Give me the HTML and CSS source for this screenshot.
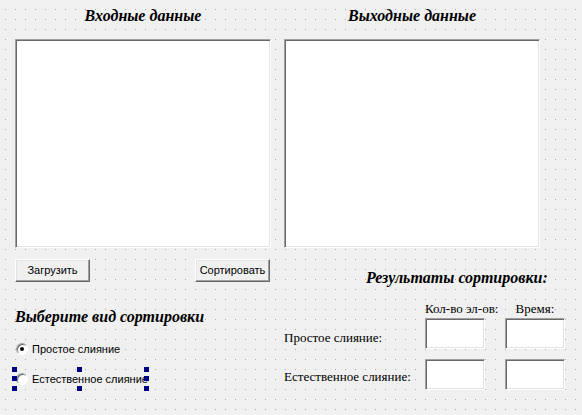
FILE: index.html
```html
<!DOCTYPE html>
<html lang="ru">
<head>
<meta charset="utf-8">
<title>Сортировка слиянием</title>
<link rel="stylesheet" href="styles.css">
</head>
<body>
<div class="form">
  <div class="top">
    <div class="col">
      <div class="title">Входные данные</div>
      <div class="memo"></div>
    </div>
    <div class="col">
      <div class="title">Выходные данные</div>
      <div class="memo"></div>
    </div>
  </div>
  <div class="bottom">
    <div class="left">
      <div class="buttons">
        <div class="btn">Загрузить</div>
        <div class="btn">Сортировать</div>
      </div>
      <div class="heading">Выберите вид сортировки</div>
      <div class="radio first">
        <span class="circle checked"></span>
        <span class="rlabel">Простое слияние</span>
      </div>
      <div class="radio second selected">
        <span class="circle"></span>
        <span class="rlabel">Естественное слияние</span>
        <span class="h h-tl"></span><span class="h h-tm"></span><span class="h h-tr"></span>
        <span class="h h-ml"></span><span class="h h-mr"></span>
        <span class="h h-bl"></span><span class="h h-bm"></span><span class="h h-br"></span>
      </div>
    </div>
    <div class="right">
      <div class="heading res">Результаты сортировки:</div>
      <div class="table">
        <div class="hdr hdr1">Кол-во эл-ов:</div>
        <div class="hdr hdr2">Время:</div>
        <div class="lbl">Простое слияние:</div>
        <div class="edit"></div>
        <div class="edit"></div>
        <div class="lbl lbl2">Естественное слияние:</div>
        <div class="edit edit2"></div>
        <div class="edit edit2"></div>
      </div>
    </div>
  </div>
</div>
</body>
</html>
```
FILE: styles.css
```css
html, body {
  margin: 0;
  padding: 0;
}
body {
  width: 582px;
  height: 415px;
  overflow: hidden;
  background-color: #f0f0f0;
  background-image:
    linear-gradient(to bottom, transparent 1px, #f0f0f0 1px),
    linear-gradient(to right, #a8a8a8 1px, transparent 1px);
  background-size: 10px 10px, 10px 10px;
  background-position: 5px 9px, 5px 9px;
  font-family: "Liberation Serif", "Times New Roman", serif;
  color: #000;
}
.form {
  padding-left: 15px;
}
.top {
  display: flex;
  gap: 13px;
}
.col {
  width: 256px;
  display: flex;
  flex-direction: column;
  align-items: center;
}
.title, .heading {
  font-family: "Liberation Serif", "Times New Roman", serif;
  font-weight: bold;
  font-style: italic;
  font-size: 16px;
  line-height: 18px;
  height: 18px;
  white-space: nowrap;
}
.title {
  margin-top: 7px;
  margin-bottom: 14px;
}
.memo {
  box-sizing: border-box;
  width: 256px;
  height: 209px;
  background: #fff;
  border-top: 1px solid #a0a0a0;
  border-left: 1px solid #a0a0a0;
  border-right: 1px solid #fff;
  border-bottom: 1px solid #fff;
  box-shadow: inset 1px 1px 0 #696969, inset -1px -1px 0 #e3e3e3;
}
.bottom {
  display: flex;
  align-items: flex-start;
}
.left {
  width: 269px;
  display: flex;
  flex-direction: column;
}
.buttons {
  margin-top: 11px;
  width: 255px;
  display: flex;
  justify-content: space-between;
}
.btn {
  box-sizing: border-box;
  width: 75px;
  height: 23px;
  display: flex;
  align-items: center;
  justify-content: center;
  font-family: "Liberation Sans", Arial, sans-serif;
  font-size: 11px;
  background: #f0f0f0;
  border-top: 1px solid #fff;
  border-left: 1px solid #fff;
  border-right: 1px solid #696969;
  border-bottom: 1px solid #696969;
  box-shadow: inset -1px -1px 0 #a0a0a0, inset 1px 1px 0 #e3e3e3;
  padding-bottom: 1px;
}
.left .heading {
  margin-top: 26px;
}
.radio {
  position: relative;
  height: 18px;
  width: 131px;
  display: flex;
  align-items: center;
  font-family: "Liberation Sans", Arial, sans-serif;
  font-size: 11px;
}
.radio.first {
  margin-top: 14px;
}
.radio.second {
  margin-top: 12px;
}
.circle {
  position: relative;
  box-sizing: border-box;
  width: 12px;
  height: 12px;
  border-radius: 50%;
  background: #fff;
  border: 1px solid;
  border-color: #a0a0a0 #fff #fff #a0a0a0;
  box-shadow: inset 1px 1px 0 #696969;
  margin-left: 1px;
  flex: none;
}
.circle.checked::after {
  content: "";
  position: absolute;
  left: 3px;
  top: 3px;
  width: 4px;
  height: 4px;
  border-radius: 50%;
  background: #000;
}
.rlabel {
  margin-left: 4px;
  white-space: nowrap;
}
.h {
  position: absolute;
  width: 5px;
  height: 5px;
  background: #000080;
}
.h-tl, .h-tm, .h-tr { top: -3px; }
.h-ml, .h-mr { top: 6px; }
.h-bl, .h-bm, .h-br { bottom: -3px; }
.h-tl, .h-ml, .h-bl { left: -3px; }
.h-tm, .h-bm { left: 62px; }
.h-tr, .h-mr, .h-br { right: -3px; }
.right {
  display: flex;
  flex-direction: column;
  width: 282px;
}
.heading.res {
  margin-top: 21px;
  padding-left: 82px;
}
.table {
  margin-top: 14px;
  display: grid;
  grid-template-columns: 121px 60px 60px;
  column-gap: 20px;
  grid-template-rows: 17px 31px 41px;
}
.hdr {
  font-size: 13px;
  line-height: 15px;
  white-space: nowrap;
}
.hdr1 {
  grid-column: 2;
  justify-self: start;
}
.hdr2 {
  grid-column: 3;
  justify-self: center;
}
.lbl {
  grid-column: 1;
  font-size: 13px;
  line-height: 15px;
  padding-top: 12px;
  white-space: nowrap;
}
.lbl2 {
  padding-top: 20px;
}
.edit {
  box-sizing: border-box;
  height: 31px;
  background: #fff;
  border-top: 1px solid #a0a0a0;
  border-left: 1px solid #a0a0a0;
  border-right: 1px solid #fff;
  border-bottom: 1px solid #fff;
  box-shadow: inset 1px 1px 0 #696969, inset -1px -1px 0 #e3e3e3;
}
.edit2 {
  margin-top: 10px;
}
```
